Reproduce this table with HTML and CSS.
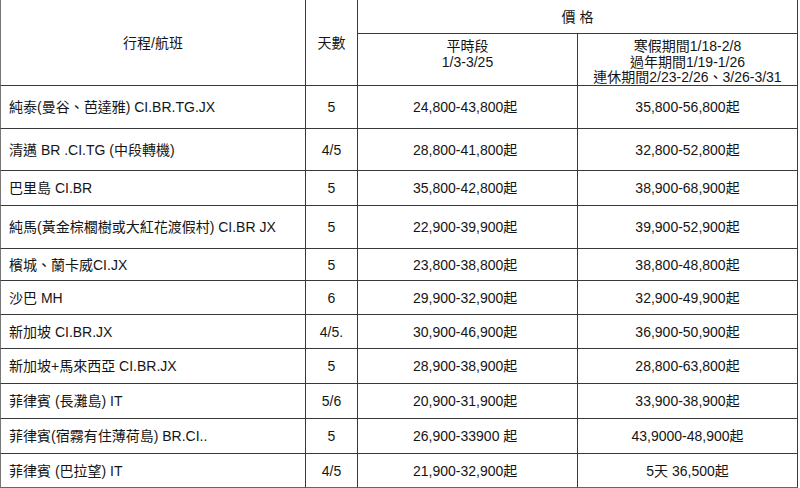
FILE: index.html
```html
<!DOCTYPE html>
<html lang="zh-Hant">
<head>
<meta charset="utf-8">
<title>行程價格</title>
<link rel="stylesheet" href="styles.css">
</head>
<body>
<div class="price-table" role="table">
  <div class="cell head route-h" role="columnheader">行程/航班</div>
  <div class="cell head days-h" role="columnheader">天數</div>
  <div class="cell head price-h" role="columnheader">價 格</div>
  <div class="cell head sub normal-h" role="columnheader">平時段<br>1/3-3/25</div>
  <div class="cell head sub peak-h" role="columnheader">寒假期間1/18-2/8<br>過年期間1/19-1/26<br>連休期間2/23-2/26、3/26-3/31</div>

  <div class="cell route">純泰(曼谷、芭達雅) CI.BR.TG.JX</div><div class="cell days">5</div><div class="cell normal">24,800-43,800起</div><div class="cell peak">35,800-56,800起</div>
  <div class="cell route">清邁 BR .CI.TG (中段轉機)</div><div class="cell days">4/5</div><div class="cell normal">28,800-41,800起</div><div class="cell peak">32,800-52,800起</div>
  <div class="cell route">巴里島 CI.BR</div><div class="cell days">5</div><div class="cell normal">35,800-42,800起</div><div class="cell peak">38,900-68,900起</div>
  <div class="cell route">純馬(黃金棕櫚樹或大紅花渡假村) CI.BR JX</div><div class="cell days">5</div><div class="cell normal">22,900-39,900起</div><div class="cell peak">39,900-52,900起</div>
  <div class="cell route">檳城、蘭卡威CI.JX</div><div class="cell days">5</div><div class="cell normal">23,800-38,800起</div><div class="cell peak">38,800-48,800起</div>
  <div class="cell route">沙巴 MH</div><div class="cell days">6</div><div class="cell normal">29,900-32,900起</div><div class="cell peak">32,900-49,900起</div>
  <div class="cell route">新加坡 CI.BR.JX</div><div class="cell days">4/5.</div><div class="cell normal">30,900-46,900起</div><div class="cell peak">36,900-50,900起</div>
  <div class="cell route">新加坡+馬來西亞 CI.BR.JX</div><div class="cell days">5</div><div class="cell normal">28,900-38,900起</div><div class="cell peak">28,800-63,800起</div>
  <div class="cell route">菲律賓 (長灘島) IT</div><div class="cell days">5/6</div><div class="cell normal">20,900-31,900起</div><div class="cell peak">33,900-38,900起</div>
  <div class="cell route">菲律賓(宿霧有住薄荷島) BR.CI..</div><div class="cell days">5</div><div class="cell normal">26,900-33900 起</div><div class="cell peak">43,9000-48,900起</div>
  <div class="cell route last">菲律賓 (巴拉望) IT</div><div class="cell days last">4/5</div><div class="cell normal last">21,900-32,900起</div><div class="cell peak last">5天 36,500起</div>
</div>
</body>
</html>
```

FILE: styles.css
```css
html, body {
  margin: 0;
  padding: 0;
  background: #ffffff;
}

body {
  font-family: "Liberation Sans", Arial, "Noto Sans CJK TC", sans-serif;
  font-size: 14px;
  color: #151515;
}

.price-table {
  display: grid;
  width: 798px;
  grid-template-columns: 306px 52px 220px 220px;
  grid-template-rows: 34px 52px 43px 42px 35px 43px 32px 34px 34px 35px 35px 35px 34px;
}

.cell {
  box-sizing: border-box;
  display: flex;
  align-items: center;
  border-right: 1px solid #3a3a3a;
  border-bottom: 1px solid #3a3a3a;
  line-height: 16px;
  white-space: nowrap;
}

.route-h {
  grid-row: 1 / span 2;
  grid-column: 1;
  justify-content: center;
  border-left: 1px solid #777777;
  padding-top: 1px;
}

.days-h {
  grid-row: 1 / span 2;
  grid-column: 2;
  justify-content: center;
  padding-top: 1px;
}

.price-h {
  grid-row: 1;
  grid-column: 3 / span 2;
  justify-content: center;
  padding-top: 1px;
}

.sub {
  align-items: flex-start;
  justify-content: center;
  text-align: center;
  padding-top: 5px;
  line-height: 15.5px;
}

.route {
  border-left: 1px solid #777777;
  padding-left: 8px;
}

.days {
  justify-content: center;
}

.normal {
  padding-left: 55px;
}

.peak {
  justify-content: center;
}

.last {
  border-bottom-color: #666666;
}
```
